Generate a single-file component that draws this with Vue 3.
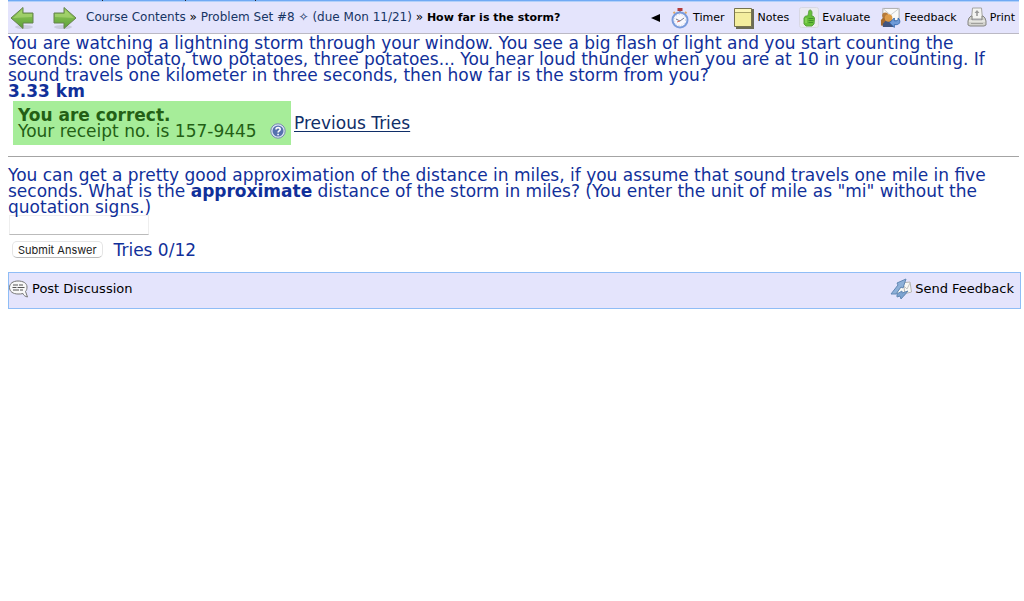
<script setup>
import { ref } from 'vue'

const answer = ref('')
</script>

<template>
  <div class="page">
    <header class="bar">
      <div class="ticks" aria-hidden="true"><i></i><i></i><i></i></div>
      <nav class="crumbs">
        <a href="#" class="arrow" aria-label="Previous">
          <svg width="24" height="24" viewBox="0 0 24 24">
            <defs>
              <linearGradient id="green" x1="0" y1="0" x2="0" y2="1">
                <stop offset="0" stop-color="#9bd05c" /><stop offset="1" stop-color="#5a9f38" />
              </linearGradient>
            </defs>
            <ellipse cx="14" cy="21" rx="9" ry="2" fill="#b9bccb" opacity=".6" />
            <path d="M1 12 13 1.500V7h10v10H13v5.500z" fill="url(#green)" stroke="#67824f" />
            <path d="M3 12 12 4v4h10v3z" fill="#b9e082" opacity=".5" />
          </svg>
        </a>
        <a href="#" class="arrow next" aria-label="Next">
          <svg width="24" height="24" viewBox="0 0 24 24">
            <ellipse cx="10" cy="21" rx="9" ry="2" fill="#b9bccb" opacity=".6" />
            <path d="M23 12 11 1.500V7H1v10h10v5.500z" fill="url(#green)" stroke="#67824f" />
            <path d="M21 12 12 4v4H2v3z" fill="#b9e082" opacity=".5" />
          </svg>
        </a>
        <span class="trail"><a href="#">Course Contents</a> » <a href="#">Problem Set #8 ✧ (due Mon 11/21)</a> » <b>How far is the storm?</b></span>
      </nav>
      <div class="tools">
        <button class="collapse" type="button" aria-label="Collapse">
          <svg width="9" height="8" viewBox="0 0 9 8"><path d="M0 4 9 0v8z" fill="#000" /></svg>
        </button>
        <a href="#">
          <svg width="20" height="22" viewBox="0 0 20 22">
            <path d="M7.500 1h5v3h-5z" fill="#b33a3a" />
            <path d="M9 4h2v2H9z" fill="#999" />
            <path d="m3.500 5 1.500 1.500M16.500 5 15 6.500" stroke="#e5a763" stroke-width="2" />
            <circle cx="10" cy="13" r="7.500" fill="#f8f8ff" stroke="#799bdc" stroke-width="2" />
            <circle cx="10" cy="13" r="5.500" fill="none" stroke="#c7cbd8" stroke-dasharray="1 2" />
            <path d="m6 12 4 2 4-3" fill="none" stroke="#767b8d" />
            <path d="m10 14-3 1" stroke="#dd6c5f" />
          </svg>Timer
        </a>
        <a href="#">
          <svg width="20" height="22" viewBox="0 0 20 22">
            <path d="M2 2h18v20H2z" fill="#6c6c58" />
            <path d="M.5 1.500h17v18H.5z" fill="#f4ee9e" stroke="#77734d" />
            <path d="M1 2h16v3H1z" fill="#fcf7b5" /><path d="M1 5.500h16" stroke="#aaa466" />
          </svg>Notes
        </a>
        <a href="#">
          <svg width="20" height="21" viewBox="0 0 20 21">
            <rect x=".5" y=".5" width="19" height="20" rx="2" fill="#eaeaf0" stroke="#d8d8e4" />
            <path d="M8.500 9c1.500-2 .5-6 2.500-6s2.500 3 1.500 6h1.500l1.500 2-.5 6-2 2H7l-2-2v-6l1.500-2z" fill="#66c038" stroke="#5ba33c" />
            <path d="M9.500 11.500h5M9.500 13.500h5M9.500 15.500h4.500" stroke="#429129" /><path d="M7 11v5" stroke="#9be06a" />
          </svg>Evaluate
        </a>
        <a href="#">
          <svg width="21" height="21" viewBox="0 0 22 21">
            <path d="M3 1h17v13H3z" fill="#fafafa" stroke="#aaa" />
            <path d="m3 1 8 7 9-7" fill="none" stroke="#ccc" />
            <path d="M1 19v-6l3-3h5l3 4v6z" fill="#a66b2d" />
            <circle cx="5.500" cy="8.500" r="3.200" fill="#b5793a" />
            <path d="M3 20.500V17l3-3h5l3 3v3.500z" fill="#41547d" />
            <circle cx="9" cy="11" r="4" fill="#dd9b49" />
            <path d="m10 16 5-5v3h2c2 0 2-2 2-3 3 3 2 7-2 7h-2v3z" fill="#6f9bd8" stroke="#386bb0" />
          </svg>Feedback
        </a>
        <a href="#">
          <svg width="20" height="21" viewBox="0 0 20 21">
            <path d="M5.500 1h9l1 11h-11z" fill="#f4f4f1" stroke="#a4a4a2" />
            <path d="m10 3 2.500 3h-1.700v3H9.200V6H7.500z" fill="#999" />
            <path d="m2 11 2-2h1v4h10V9h1l2 2 1 3v4l-2 1H3l-2-1v-4z" fill="#d2d2cd" stroke="#868682" />
            <path d="M2 14h16" stroke="#f9f9f5" /><path d="M4 16.500h12" stroke="#a0a09c" />
          </svg>Print
        </a>
      </div>
    </header>

    <main>
      <p>You are watching a lightning storm through your window. You see a big flash of light and you start counting the seconds: one potato, two potatoes, three potatoes... You hear loud thunder when you are at 10 in your counting. If sound travels one kilometer in three seconds, then how far is the storm from you?<br><b>3.33 km</b></p>
      <div class="result">
        <div class="correct">
          <b>You are correct.</b>
          <span class="receipt">Your receipt no. is 157-9445
            <a href="#" aria-label="Help">
              <svg width="16" height="16" viewBox="0 0 16 16">
                <circle cx="8" cy="8" r="7.200" fill="#dce6f5" stroke="#7888b2" />
                <circle cx="8" cy="8" r="5.500" fill="#5671ae" />
                <path d="M6 6.500C6 4 10.200 4 10.200 6.300 10.200 8 8.100 7.800 8.100 9.500M8.100 10.700v1.500" fill="none" stroke="#fff" stroke-width="1.600" />
              </svg>
            </a>
          </span>
        </div>
        <a href="#" class="previous">Previous Tries</a>
      </div>
      <hr>
      <form @submit.prevent>
        <label for="answer">You can get a pretty good approximation of the distance in miles, if you assume that sound travels one mile in five seconds. What is the <b>approximate</b> distance of the storm in miles? (You enter the unit of mile as "mi" without the quotation signs.)</label>
        <input id="answer" v-model="answer" type="text">
        <div class="submit"><button type="submit">Submit Answer</button><span>Tries 0/12</span></div>
      </form>
    </main>

    <footer>
      <a href="#">
        <svg width="20" height="18" viewBox="0 0 20 18">
          <path d="M9 1C14 1 18 3 18 7c0 2-.5 3.500-1.500 4.500l2 5.500c-2-.5-4-1.500-4.500-3.500-1.500.5-3 .5-5 .5-5 0-8.500-2.500-8.500-6.500S4 1 9 1z" fill="#f8f8f8" stroke="#777" />
          <path d="M4 5h5m1 0h4M3.500 7.500h4m1 0h7M4 10h6m1 0h3" stroke="#555" />
        </svg>Post Discussion
      </a>
      <a href="#">
        <svg width="22" height="22" viewBox="0 0 22 22">
          <path d="m11 5 9-1 1.500 10-8 2z" fill="#f8f8f4" stroke="#b5b5b3" />
          <path d="m12 6 5 5 3-6" fill="none" stroke="#c4c4c4" />
          <path d="m7 10 7-1 1 8-7 1z" fill="#f8f8f4" stroke="#b5b5b3" />
          <path d="m1 16 7-9-1-2 9-4-3 9-2-1-5 7z" fill="#8db0d8" stroke="#6288b4" />
          <path d="m7 16 5-3v2l6-2-7 8-1-3-3 1z" fill="#7ba3d0" stroke="#6288b4" />
        </svg>Send Feedback
      </a>
    </footer>
  </div>
</template>

<style>
body { margin: 0; background: #fff; }
</style>

<style scoped>
.page {
  font-family: Verdana, "DejaVu Sans", sans-serif;
  font-size: 17px;
  line-height: 16px;
  color: #11309a;
  padding: 0 3px 0 8px;
}
a { color: inherit; text-decoration: none; }
svg { display: block; flex: none; }
.bar {
  position: relative;
  display: flex;
  align-items: center;
  justify-content: space-between;
  box-sizing: border-box;
  height: 34px;
  margin-right: 2px;
  padding: 1px 4px 0 2px;
  border-top: 1px solid #70aaf4;
  border-bottom: 1px solid #bbb9c4;
  background: #e4e4fc;
  box-shadow: inset 0 1px #b2d0fa;
  font-size: 12px;
  white-space: nowrap;
}
.ticks { position: absolute; top: -1px; left: 94px; display: flex; gap: 82px; }
.ticks i { width: 1px; height: 1px; background: #223; }
.ticks i:last-child { margin-left: -13px; }
.crumbs, .tools, .tools a, footer a { display: flex; align-items: center; }
.next { margin: 0 9px 0 19px; }
.trail { color: #000; }
.trail a { color: #173564; }
.trail b, .tools { font-size: 11px; }
.tools { color: #000; gap: 10px; }
.tools a, footer a { gap: 3px; }
.collapse { padding: 0; border: 0; background: none; }
p { margin: 0; padding-top: 1px; }
.result { display: flex; align-items: center; gap: 3px; margin: 2px 0 0 5px; }
.correct {
  display: flex;
  flex-direction: column;
  box-sizing: border-box;
  min-width: 278px;
  padding: 6px 5px;
  background: #a6ed99;
  color: #235f15;
}
.receipt { display: flex; align-items: center; justify-content: space-between; gap: 5px; white-space: nowrap; }
.previous { color: #102e68; text-decoration: underline; text-underline-offset: 2px; }
hr { margin: 11px 2px 10px 0; border: 0; border-top: 1px solid #a4a4a4; }
label { display: block; }
input {
  display: block;
  box-sizing: border-box;
  width: 140px;
  height: 20px;
  margin-left: 1px;
  border: 1px solid #eee;
  border-bottom-color: #bbb;
  background: #fff;
  font: inherit;
}
.submit { display: flex; align-items: center; gap: 11px; margin: 6px 0 0 4px; }
.submit button {
  height: 17px;
  padding: 0 5px;
  border: 1px solid #e5e5e5;
  border-bottom-color: #bbb;
  border-radius: 5px;
  background: #fff;
  color: #222;
  font: 11px/14px Inter, sans-serif;
}
footer {
  display: flex;
  align-items: flex-start;
  justify-content: space-between;
  box-sizing: border-box;
  height: 37px;
  margin-top: 14px;
  padding: 5px 6px 0 0;
  border: 1px solid #8fbdf6;
  background: #e4e4fc;
  color: #000;
  font-size: 13px;
}
footer a { height: 22px; }
</style>
